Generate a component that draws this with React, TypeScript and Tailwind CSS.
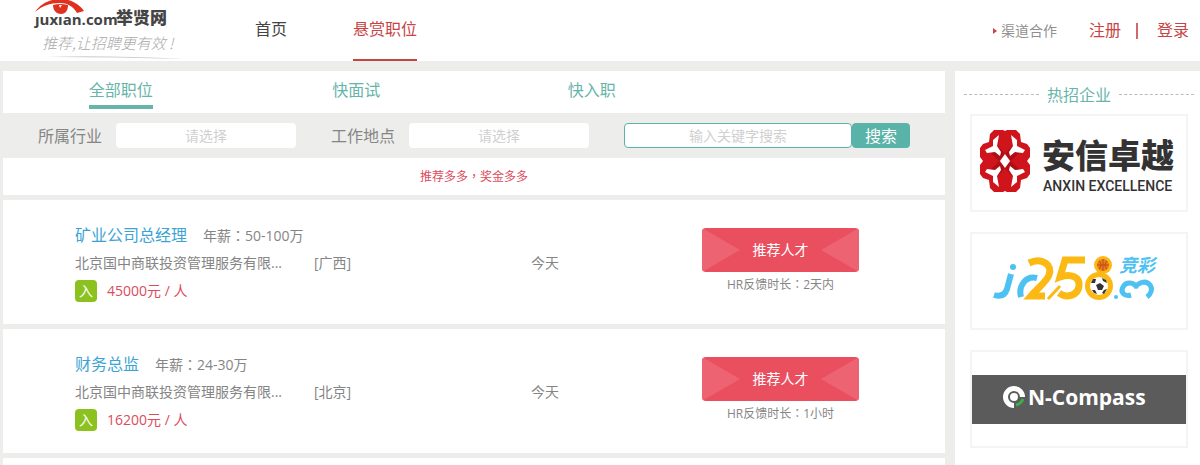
import { useState } from "react";

interface Job {
  id: number;
  title: string;
  salary: string;
  company: string;
  city: string;
  date: string;
  bonus: string;
  feedback: string;
}

const jobs: Job[] = [
  {
    id: 1,
    title: "矿业公司总经理",
    salary: "50-100万",
    company: "北京国中商联投资管理服务有限...",
    city: "广西",
    date: "今天",
    bonus: "45000元 / 人",
    feedback: "2天内",
  },
  {
    id: 2,
    title: "财务总监",
    salary: "24-30万",
    company: "北京国中商联投资管理服务有限...",
    city: "北京",
    date: "今天",
    bonus: "16200元 / 人",
    feedback: "1小时",
  },
];

const tabs = ["全部职位", "快面试", "快入职"];

const knotCorners = [
  "translate(0 0)",
  "translate(66 0) scale(-1 1)",
  "translate(0 90) scale(1 -1)",
  "translate(66 90) scale(-1 -1)",
];

function SiteLogo() {
  return (
    <svg width="190" height="60" viewBox="0 0 190 60" className="block shrink-0">
      <path d="M35 12C41 3 51-1 60-1c11 0 19 5 24 12l-7 2C73 6 67 3 60 3 50 3 42 6 35 12Z" fill="#e0301e" />
      <path d="M53 5q7-2 15 0c0 6-3 9-7 9s-8-3-8-9Z" fill="#e0301e" />
      <path d="M59 5h3l-2 3Z" fill="#fff" />
      <text x="35" y="25" fontSize="15" fontWeight="700" fill="#444" fontFamily="Open Sans">
        ȷuxıan.com
      </text>
      <text x="116" y="24" fontSize="17" fontWeight="900" fill="#444" fontFamily="Noto Sans CJK SC">
        举贤网
      </text>
      <text x="42" y="49" fontSize="15" fontStyle="italic" fontWeight="300" fill="#aaa" fontFamily="Noto Sans CJK SC">
        推荐,让招聘更有效 !
      </text>
      <path d="M46 57q60-2 138 2q-70-2-138-2Z" fill="#ccc" />
    </svg>
  );
}

function AnxinLogo() {
  return (
    <svg width="214" height="94" viewBox="0 0 214 94">
      {knotCorners.map((corner) => (
        <g key={corner} transform={corner}>
          <path d="M33 15l-2-1h-9l-4 4-1 8-6 2-3 4v9l3 4h22Z" fill="#d0141c" />
          <path d="M26 30l7 8-6 7-8-8Z" fill="#ae0f17" />
          <path d="M27 19l-6 5v6l-8 4 2 3 8-1 5 4 1-4-4-6Z" fill="#fff" />
        </g>
      ))}
      <path d="M33 38l5 7-5 7-5-7Z" fill="#fff" />
      <text x="70" y="52" fontSize="33" fontWeight="900" fill="#333" fontFamily="Noto Sans CJK SC">
        安信卓越
      </text>
      <text x="71" y="75" fontSize="14" fontWeight="500" fill="#333" fontFamily="Roboto">
        ANXIN EXCELLENCE
      </text>
    </svg>
  );
}

function JingcaiLogo() {
  return (
    <svg width="214" height="94" viewBox="0 0 214 94">
      <g fill="none" stroke="#4cc1f2" strokeWidth="6">
        <path d="M39 40l-4 15q-3 9-13 6" />
        <path d="M65 44c-11-3-19 8-16 19" />
        <path
          d="M159 61c-7 2-11-3-8-8 3-6 11-5 14 1M163 54c3-6 11-8 15-3 3 4 1 9-3 12"
          strokeWidth="5"
        />
      </g>
      <circle cx="41" cy="33" r="3" fill="#4cc1f2" />
      <circle cx="144" cy="63" r="2" fill="#4cc1f2" />
      <g fill="none" stroke="#fcb913" strokeWidth="7">
        <path d="M57 29c13-6 24 2 20 12-2 6-11 13-18 21h14" />
        <path d="M113 26H93l-5 17c11-4 20 0 19 9-1 9-12 13-20 7" />
        <path d="M76 65l12-13" strokeWidth="3" />
      </g>
      <circle cx="131" cy="31" r="9" fill="#fcb913" />
      <circle cx="127" cy="52" r="14" fill="#fcb913" />
      <circle cx="131" cy="31" r="6" fill="#ee7a20" />
      <path d="M125 31h12M131 25v12M127 27q4 4 0 8M135 27q-4 4 0 8" stroke="#b65312" fill="none" />
      <circle cx="127" cy="52" r="9" fill="#fff" />
      <path d="M124 51l4-2 4 3-2 4h-4ZM119 49l2-4 3 0-1 4ZM130 44l4 2 1 3-4-2ZM120 56l3 0 2 4-3-1ZM132 56l3-1-3 5-2-1Z" fill="#333" />
      <text x="147" y="38" fontSize="18" fontStyle="italic" fontWeight="700" fill="#4cc1f2" fontFamily="Noto Sans CJK SC">
        竞彩
      </text>
    </svg>
  );
}

function CompassLogo() {
  return (
    <svg width="214" height="49" viewBox="0 0 214 49" className="bg-[#5b5b5b]">
      <path d="M42 33A11 11 0 1 1 53 22h-5a6 6 0 1 0-6 6Z" fill="#fff" />
      <circle cx="42" cy="22" r="4" fill="#fff" />
      <path d="M44 30q5-1 7-6" fill="none" stroke="#3fae49" strokeWidth="3" />
      <text x="56" y="30" fontSize="21" fontWeight="700" fill="#fff" fontFamily="Open Sans">
        N-Compass
      </text>
    </svg>
  );
}

// Full-width punctuation centred in its cell
function Mark({ children }: { children: string }) {
  return <span className="font-['Noto_Sans_CJK_TC',sans-serif]">{children}</span>;
}

function JobCard({ job }: { job: Job }) {
  return (
    <article className="grid h-[124px] grid-cols-[239fr_217fr_171fr_243fr] bg-white pl-[72px] pt-[21px] text-sm leading-7 text-[#858585]">
      <div>
        <div className="flex h-7 gap-4 whitespace-nowrap">
          <a href="#" className="text-base leading-7 text-[#3ba4d5]">
            {job.title}
          </a>
          <span>
            年薪<Mark>：</Mark>
            {job.salary}
          </span>
        </div>
        <p className="h-7 whitespace-nowrap">{job.company}</p>
        <div className="flex items-center gap-[10px] text-[#dc4c5d]">
          <span className="flex size-[22px] items-center justify-center rounded bg-[#8cc220] text-white">
            入
          </span>
          <span>{job.bonus}</span>
        </div>
      </div>
      <span className="pt-7">[{job.city}]</span>
      <span className="pt-7">{job.date}</span>
      <div className="flex w-[157px] flex-col items-center pt-[7px]">
        <button className="relative h-11 w-full overflow-hidden rounded bg-[#e94f5f] text-white">
          <svg viewBox="0 0 157 44" className="absolute inset-0 size-full">
            <path d="M0 0l38 22L0 44ZM157 0l-38 22 38 22Z" fill="#ed6371" />
          </svg>
          <span className="relative">推荐人才</span>
        </button>
        <span className="text-xs leading-6">
          HR反馈时长<Mark>：</Mark>
          {job.feedback}
        </span>
      </div>
    </article>
  );
}

export default function App() {
  const [activeTab, setActiveTab] = useState(tabs[0]);

  return (
    <div className="flex min-h-screen flex-col bg-[#ededec] font-['Open_Sans','Noto_Sans_CJK_SC',sans-serif]">
      <header className="flex h-[61px] bg-white pr-[11px] text-base leading-[59px]">
        <SiteLogo />
        <nav className="ml-[65px] flex gap-[66px]">
          <a href="#" className="text-[#444]">
            首页
          </a>
          <a href="#" className="border-b-2 border-[#c04545] text-[#c84444]">
            悬赏职位
          </a>
        </nav>
        <div className="ml-auto flex items-center text-[#c84444]">
          <a href="#" className="mr-8 flex items-center gap-1 text-sm leading-[59px] text-[#909090]">
            <svg width="4" height="6" viewBox="0 0 4 6">
              <path d="M0 0l4 3-4 3Z" fill="#c84444" />
            </svg>
            渠道合作
          </a>
          <a href="#">注册</a>
          <span className="ml-[15px] mr-[19px] h-4 w-[2px] bg-[#d06a6a]" />
          <a href="#">登录</a>
        </div>
      </header>

      <div className="mt-[10px] flex flex-1 gap-[10px] pl-[3px]">
        <main className="flex flex-1 flex-col gap-[5px]">
          <div>
            {/* Tabs */}
            <div className="grid h-[42px] grid-cols-4 justify-items-center bg-white">
              {tabs.map((tab) => (
                <button
                  key={tab}
                  onClick={() => setActiveTab(tab)}
                  className={`h-[38px] border-b-4 pt-1 text-base text-[#67b5aa] ${
                    tab === activeTab ? "border-[#67b5aa]" : "border-transparent"
                  }`}
                >
                  {tab}
                </button>
              ))}
            </div>

            {/* Filters */}
            <form className="flex h-[45px] items-center pl-[35px] text-base text-[#858585]">
              <label htmlFor="industry">所属行业</label>
              <select
                id="industry"
                className="ml-[14px] mr-[35px] h-[25px] w-[180px] appearance-none rounded bg-white text-center text-sm text-[#d0d0d0]"
              >
                <option>请选择</option>
              </select>
              <label htmlFor="place">工作地点</label>
              <select
                id="place"
                className="ml-[14px] mr-[35px] h-[25px] w-[180px] appearance-none rounded bg-white text-center text-sm text-[#d0d0d0]"
              >
                <option>请选择</option>
              </select>
              <input
                type="text"
                aria-label="关键字"
                placeholder="输入关键字搜索"
                className="h-[25px] w-[228px] rounded border border-[#5ab3a8] bg-white text-center text-sm placeholder:text-[#d0d0d0]"
              />
              <button type="button" className="h-[25px] w-[58px] rounded bg-[#5ab3a8] leading-6 text-white">
                搜索
              </button>
            </form>

            <p className="h-[37px] bg-white text-center text-xs leading-9 text-[#dc4c5d]">
              推荐多多<Mark>，</Mark>奖金多多
            </p>
          </div>

          {jobs.map((job) => (
            <JobCard key={job.id} job={job} />
          ))}
          <div className="flex-1 bg-white" />
        </main>

        {/* Hot companies */}
        <aside className="w-[245px] bg-white">
          <h2 className="flex h-[43px] items-center gap-2 pl-[9px] pr-[6px] pt-1 text-base text-[#67b5aa]">
            <span className="flex-1 border-t border-dashed border-[#bbb]" />
            热招企业
            <span className="flex-1 border-t border-dashed border-[#bbb]" />
          </h2>
          <div className="flex flex-col gap-5 pl-[15px] pr-3">
            <a href="#" className="flex h-[98px] items-center border-2 border-[#f4f4f4]">
              <AnxinLogo />
            </a>
            <a href="#" className="flex h-[98px] items-center border-2 border-[#f4f4f4]">
              <JingcaiLogo />
            </a>
            <a href="#" className="flex h-[98px] items-center border-2 border-[#f4f4f4]">
              <CompassLogo />
            </a>
          </div>
        </aside>
      </div>
    </div>
  );
}
